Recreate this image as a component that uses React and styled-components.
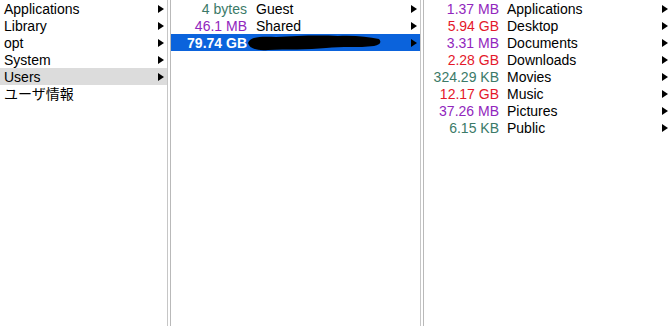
import React from 'react';
import styled, { createGlobalStyle } from 'styled-components';

const Global = createGlobalStyle`
    html, body {
        margin: 0;
        padding: 0;
        background: #ffffff;
    }
    body {
        font-family: "Liberation Sans", "Noto Sans CJK JP", sans-serif;
        font-size: 14px;
        color: #000;
    }
`;

const Browser = styled.div`
    display: flex;
    width: 671px;
    height: 326px;
    overflow: hidden;
    background: #ffffff;
`;

const Column = styled.ul`
    list-style: none;
    margin: 0;
    padding: 0;
    width: ${p => p.width}px;
    flex: none;
    display: flex;
    flex-direction: column;
`;

const Divider = styled.div`
    width: 2px;
    flex: none;
    border-left: 1px solid #c6c6c6;
    border-right: 1px solid #b9b9b9;
`;

const Row = styled.li`
    position: relative;
    display: flex;
    align-items: center;
    height: 17px;
    line-height: 17px;
    padding-left: ${p => (p.plain ? 4 : 0)}px;
    background: ${p => (p.selected ? '#0b63dc' : p.parent ? '#dcdcdc' : 'transparent')};
    color: ${p => (p.selected ? '#ffffff' : '#000000')};
    white-space: nowrap;
`;

const Text = styled.span`
    padding-top: 1px;
`;

const Size = styled(Text)`
    width: ${p => p.width}px;
    flex: none;
    text-align: right;
    color: ${p => p.color};
    font-weight: ${p => (p.selected ? 600 : 400)};
`;

const Name = styled(Text)`
    flex: 1;
    margin-left: ${p => p.gap}px;
`;

const Label = styled(Text)`
    flex: 1;
`;

const Arrow = styled.span`
    flex: none;
    width: 0;
    height: 0;
    margin-right: 3px;
    border-top: 4px solid transparent;
    border-bottom: 4px solid transparent;
    border-left: 6px solid #000;
`;

const Redaction = styled.svg`
    position: absolute;
    left: 75px;
    top: 0;
`;

const unitColor = {
    bytes: '#3b7a68',
    KB: '#3b7a68',
    MB: '#9126bd',
    GB: '#e4182a',
};

const colorFor = size => unitColor[size.split(' ')[1]];

const rootItems = ['Applications', 'Library', 'opt', 'System', 'Users'];

const userItems = [
    { size: '4 bytes', name: 'Guest' },
    { size: '46.1 MB', name: 'Shared' },
    { size: '79.74 GB', name: '', selected: true },
];

const homeItems = [
    { size: '1.37 MB', name: 'Applications' },
    { size: '5.94 GB', name: 'Desktop' },
    { size: '3.31 MB', name: 'Documents' },
    { size: '2.28 GB', name: 'Downloads' },
    { size: '324.29 KB', name: 'Movies' },
    { size: '12.17 GB', name: 'Music' },
    { size: '37.26 MB', name: 'Pictures' },
    { size: '6.15 KB', name: 'Public' },
];

function SizedRow({ item, sizeWidth, gap }) {
    return (
        <Row selected={item.selected}>
            <Size
                width={sizeWidth}
                selected={item.selected}
                color={item.selected ? '#ffffff' : colorFor(item.size)}
            >
                {item.size}
            </Size>
            <Name gap={gap}>{item.name}</Name>
            {item.selected && (
                <Redaction width="136" height="17" viewBox="0 0 136 17">
                    <path
                        d="M2 9 C4 3 14 2 30 3 C50 2 70 1 92 2 C108 1 122 3 133 5 C136 8 134 11 128 12 C112 14 96 12 80 14 C62 16 40 15 22 16 C10 17 3 14 2 9 Z"
                        fill="#000"
                    />
                </Redaction>
            )}
            <Arrow />
        </Row>
    );
}

export default function App() {
    return (
        <Browser>
            <Global />
            <Column width={167}>
                {rootItems.map(name => (
                    <Row key={name} plain parent={name === 'Users'}>
                        <Label>{name}</Label>
                        <Arrow />
                    </Row>
                ))}
                <Row plain>
                    <Label>ユーザ情報</Label>
                </Row>
            </Column>
            <Divider />
            <Column width={249}>
                {userItems.map(item => (
                    <SizedRow key={item.size} item={item} sizeWidth={76} gap={9} />
                ))}
            </Column>
            <Divider />
            <Column width={247}>
                {homeItems.map(item => (
                    <SizedRow key={item.name} item={item} sizeWidth={75} gap={8} />
                ))}
            </Column>
        </Browser>
    );
}
